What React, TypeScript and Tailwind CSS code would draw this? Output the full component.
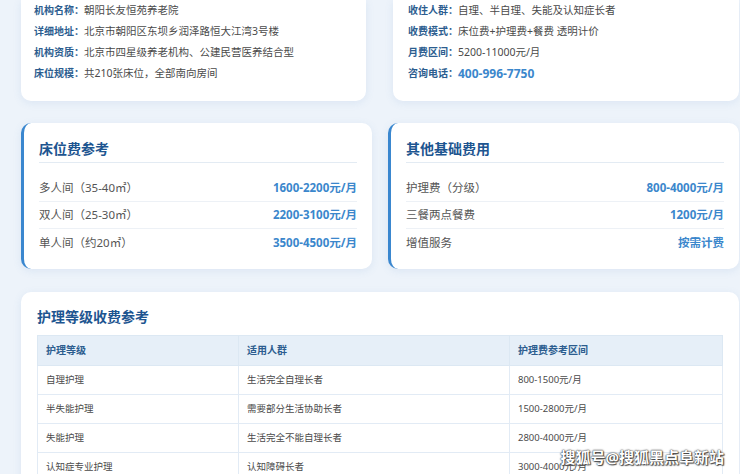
const infoLeft = [
  { label: "机构名称：", value: "朝阳长友恒苑养老院" },
  { label: "详细地址：", value: "北京市朝阳区东坝乡润泽路恒大江湾3号楼" },
  { label: "机构资质：", value: "北京市四星级养老机构、公建民营医养结合型" },
  { label: "床位规模：", value: "共210张床位，全部南向房间" },
];

const infoRight = [
  { label: "收住人群：", value: "自理、半自理、失能及认知症长者" },
  { label: "收费模式：", value: "床位费+护理费+餐费 透明计价" },
  { label: "月费区间：", value: "5200-11000元/月" },
];

const bedFees = [
  { name: "多人间（35-40㎡）", price: "1600-2200元/月" },
  { name: "双人间（25-30㎡）", price: "2200-3100元/月" },
  { name: "单人间（约20㎡）", price: "3500-4500元/月" },
];

const otherFees = [
  { name: "护理费（分级）", price: "800-4000元/月" },
  { name: "三餐两点餐费", price: "1200元/月" },
  { name: "增值服务", price: "按需计费" },
];

const careLevels = [
  { level: "自理护理", group: "生活完全自理长者", range: "800-1500元/月" },
  { level: "半失能护理", group: "需要部分生活协助长者", range: "1500-2800元/月" },
  { level: "失能护理", group: "生活完全不能自理长者", range: "2800-4000元/月" },
  { level: "认知症专业护理", group: "认知障碍长者", range: "3000-4000元/月" },
];

const FeeCard = ({
  title,
  items,
}: {
  title: string;
  items: { name: string; price: string }[];
}) => (
  <div className="w-[351px] rounded-[10px] border-l-[3px] border-[#3a87cf] bg-white px-[15px] pt-[16px] pb-[13px] shadow-[0_2px_8px_rgba(90,140,200,0.12)]">
    <h3 className="border-b border-[#e3ebf3] pb-[3px] text-[14px] font-bold leading-[20px] text-[#1d5590]">
      {title}
    </h3>
    <div className="mt-[12px]">
      {items.map((item, i) => (
        <div
          key={i}
          className={`flex h-[27px] items-center justify-between ${
            i < items.length - 1 ? "border-b border-[#edf1f6]" : ""
          }`}
        >
          <span className="text-[11.5px] text-[#555]">{item.name}</span>
          <span className="text-[11.5px] font-bold text-[#3b87cc]">{item.price}</span>
        </div>
      ))}
    </div>
  </div>
);

export default function App() {
  return (
    <div
      className="relative h-[474px] w-[740px] overflow-hidden bg-[#edf3fa] pl-[21px] pr-[1px]"
      style={{ fontFamily: '"Noto Sans", "Noto Sans CJK SC", sans-serif' }}
    >
      {/* Basic info */}
      <div className="flex justify-between">
        <div className="w-[345px] rounded-b-[10px] bg-white pl-[13px] pb-[17px] shadow-[0_2px_8px_rgba(90,140,200,0.12)]">
          {infoLeft.map((row, i) => (
            <div key={i} className="flex items-center leading-[21px]">
              <span className="text-[10px] font-bold text-[#2c5d8f]">{row.label}</span>
              <span className="text-[10.5px] text-[#4a4a4a]">{row.value}</span>
            </div>
          ))}
        </div>
        <div className="w-[346px] rounded-b-[10px] bg-white pl-[15px] pb-[17px] shadow-[0_2px_8px_rgba(90,140,200,0.12)]">
          {infoRight.map((row, i) => (
            <div key={i} className="flex items-center leading-[21px]">
              <span className="text-[10px] font-bold text-[#2c5d8f]">{row.label}</span>
              <span className="text-[10.5px] text-[#4a4a4a]">{row.value}</span>
            </div>
          ))}
          <div className="flex items-center leading-[21px]">
            <span className="text-[10px] font-bold text-[#2c5d8f]">咨询电话：</span>
            <span className="text-[12px] font-bold text-[#3b87cc]">400-996-7750</span>
          </div>
        </div>
      </div>

      {/* Fee cards */}
      <div className="mt-[22px] flex justify-between">
        <FeeCard title="床位费参考" items={bedFees} />
        <FeeCard title="其他基础费用" items={otherFees} />
      </div>

      {/* Care levels */}
      <div className="mt-[23px] rounded-t-[10px] bg-white px-[16px] pt-[15px] pb-[16px] shadow-[0_2px_8px_rgba(90,140,200,0.12)]">
        <h3 className="text-[14px] font-bold leading-[20px] text-[#1d5590]">护理等级收费参考</h3>
        <table className="mt-[8px] w-full border-collapse text-left">
          <thead>
            <tr className="h-[30px] bg-[#e6eff8] text-[10px]">
              <th className="w-[201px] border border-[#dce8f3] px-[8px] font-bold text-[#2c5d8f]">护理等级</th>
              <th className="w-[271px] border border-[#dce8f3] px-[8px] font-bold text-[#2c5d8f]">适用人群</th>
              <th className="border border-[#dce8f3] px-[8px] font-bold text-[#2c5d8f]">护理费参考区间</th>
            </tr>
          </thead>
          <tbody>
            {careLevels.map((row, i) => (
              <tr key={i} className="h-[29px] text-[9.5px]">
                <td className="border border-[#e2ebf5] px-[8px] text-[#4a4a4a]">{row.level}</td>
                <td className="border border-[#e2ebf5] px-[8px] text-[#4a4a4a]">{row.group}</td>
                <td className="border border-[#e2ebf5] px-[8px] text-[#4a4a4a]">{row.range}</td>
              </tr>
            ))}
          </tbody>
        </table>
      </div>

      {/* Watermark */}
      <div
        className="absolute right-[16px] bottom-[6px] text-[15px] font-bold text-white"
        style={{ textShadow: "0 0 2px #333, 0 0 1px #333, 1px 1px 1px #555" }}
      >
        搜狐号@搜狐黑点阜新站
      </div>
    </div>
  );
}
